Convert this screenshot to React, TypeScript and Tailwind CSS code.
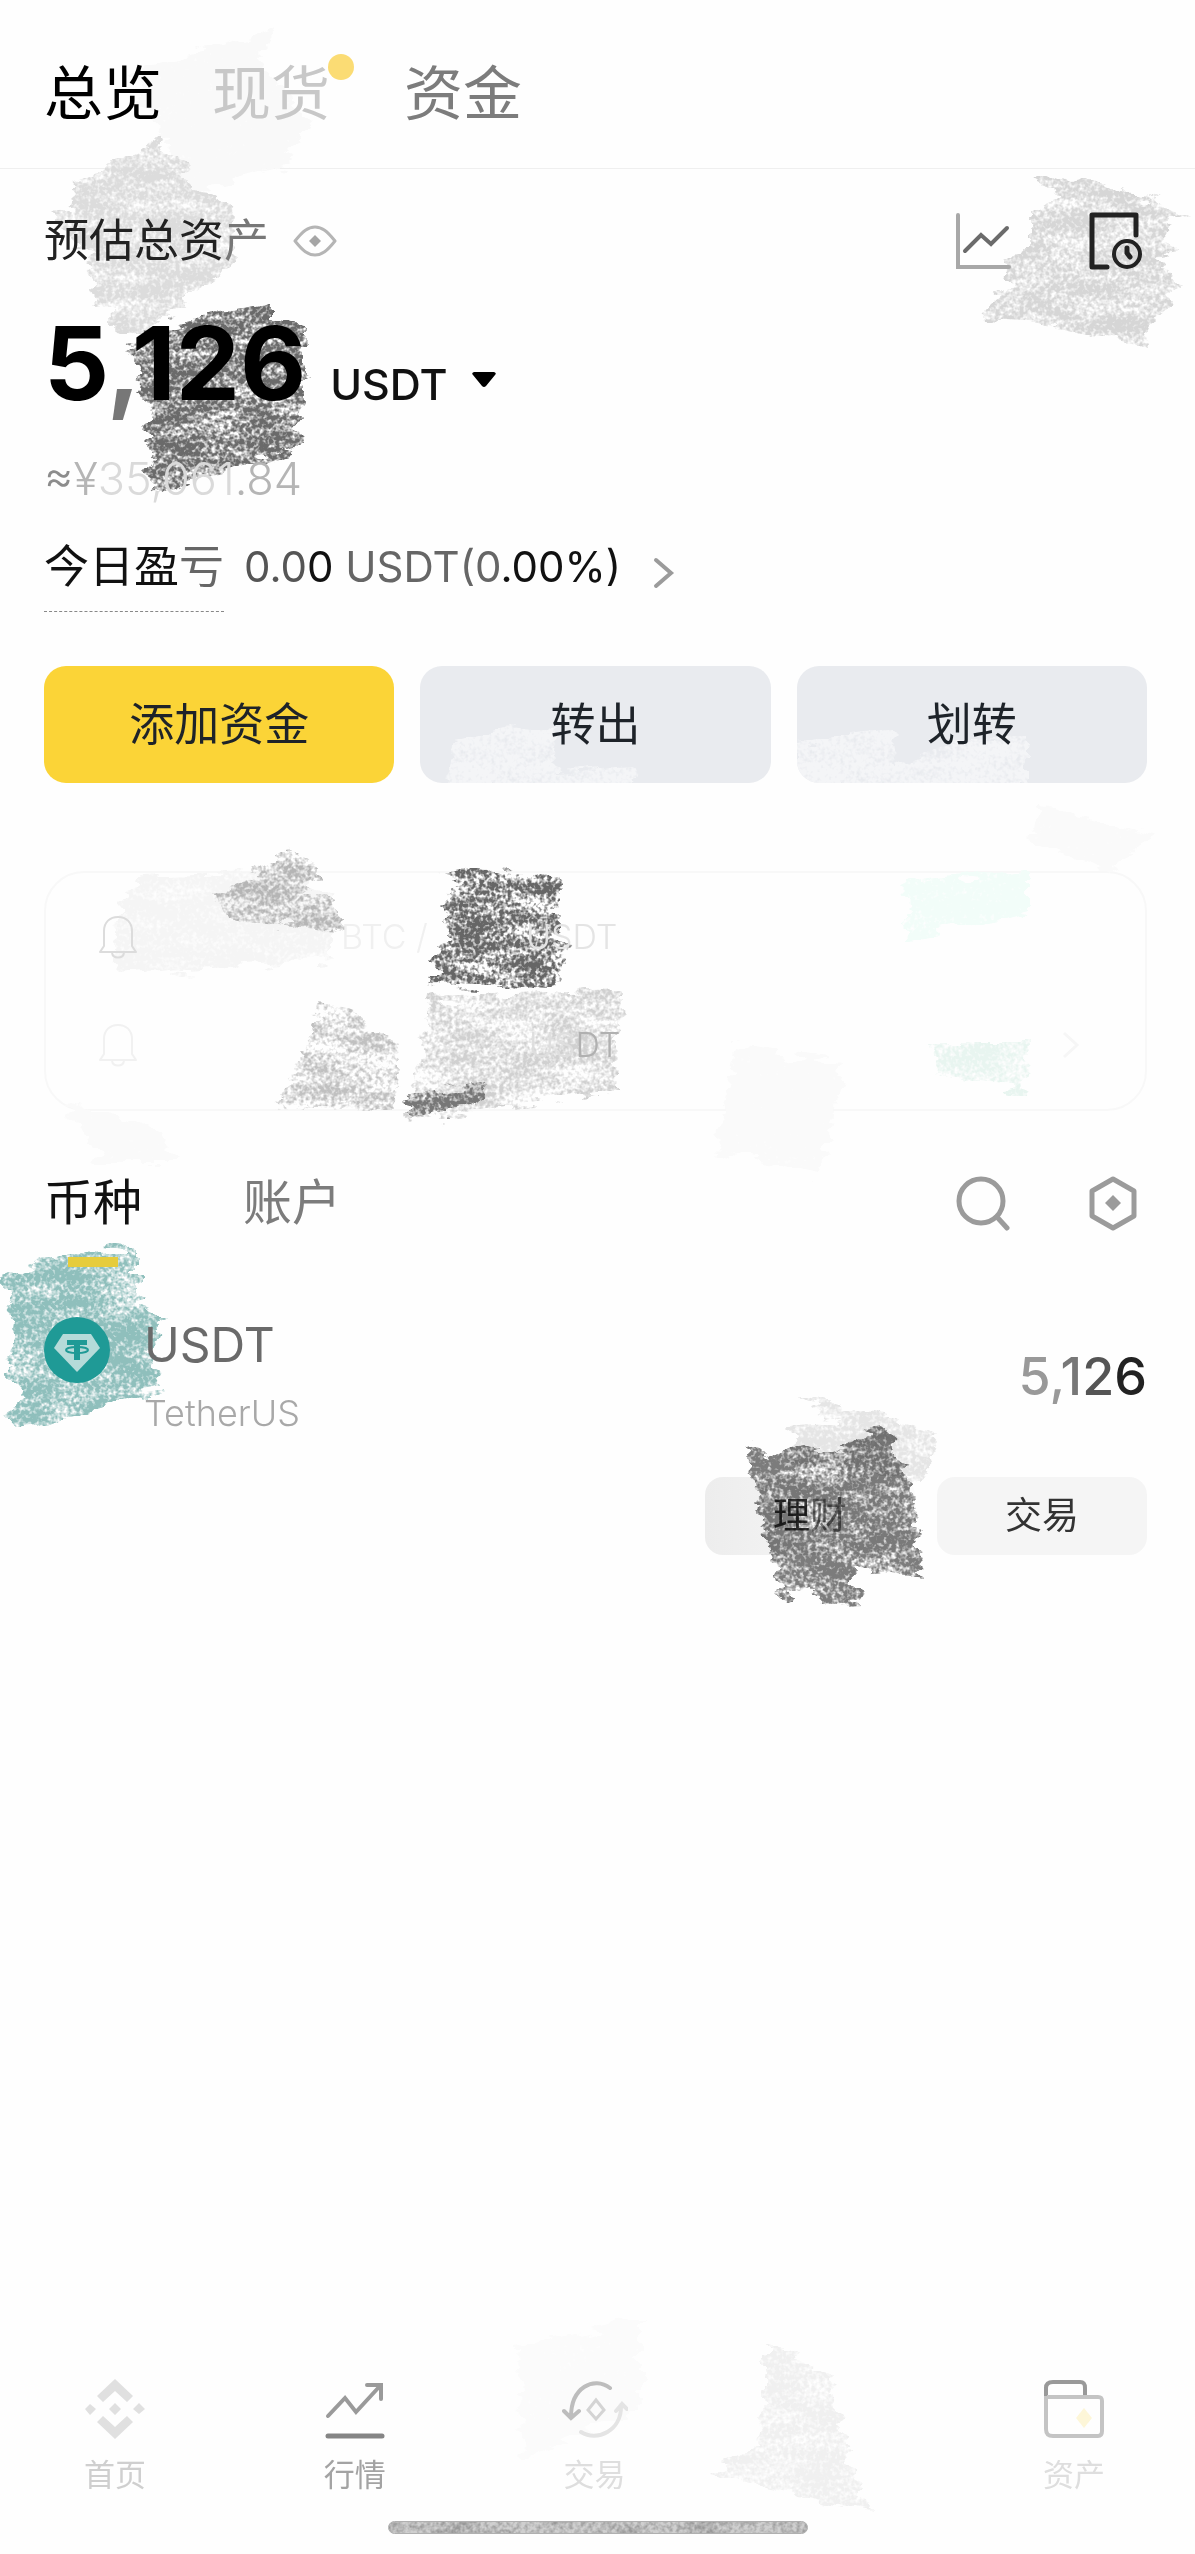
import { useId, useState } from "react";

type ScribbleProps = {
  className: string;
  viewBox: string;
  points: string;
  color: string;
  seed?: number;
  gain?: number;
  bias?: number;
};

// Crayon-like patch laid under or multiplied over the content
const Scribble = ({
  className,
  viewBox,
  points,
  color,
  seed = 1,
  gain = 4,
  bias = -1.2,
}: ScribbleProps) => {
  const id = useId();
  return (
    <svg
      aria-hidden="true"
      viewBox={viewBox}
      className={`pointer-events-none absolute overflow-visible ${className}`}
    >
      <filter
        id={id}
        x="-10%"
        y="-10%"
        width="120%"
        height="120%"
        colorInterpolationFilters="sRGB"
      >
        <feTurbulence
          type="fractalNoise"
          baseFrequency="0.03 0.09"
          numOctaves={3}
          seed={seed}
          result="edge"
        />
        <feDisplacementMap
          in="SourceGraphic"
          in2="edge"
          scale={26}
          xChannelSelector="R"
          yChannelSelector="G"
          result="rough"
        />
        <feTurbulence
          type="fractalNoise"
          baseFrequency="0.02 0.06"
          numOctaves={2}
          seed={seed + 7}
          result="broad"
        />
        <feTurbulence
          type="fractalNoise"
          baseFrequency="0.25"
          numOctaves={3}
          seed={seed + 3}
          result="fine"
        />
        <feComposite
          in="fine"
          in2="broad"
          operator="arithmetic"
          k1={0}
          k2={0.6}
          k3={0.4}
          k4={0}
        />
        <feColorMatrix
          values={`0 0 0 0 0  0 0 0 0 0  0 0 0 0 0  0 0 0 ${gain} ${bias}`}
          result="grain"
        />
        <feComposite in="rough" in2="grain" operator="in" />
      </filter>
      <polygon points={points} fill={color} filter={`url(#${id})`} />
    </svg>
  );
};

const EyeIcon = () => (
  <svg viewBox="0 0 44 32" className="h-8 w-11" fill="none">
    <path
      d="M2 16C10 6 15 2 22 2s12 4 20 14c-8 10-13 14-20 14S10 26 2 16Z"
      stroke="#b5b5b5"
      strokeWidth="3"
      strokeLinejoin="round"
    />
    <path d="m22 10 6 6-6 6-6-6Z" fill="#a5a5a5" />
  </svg>
);

const ChartIcon = () => (
  <svg viewBox="0 0 56 58" className="h-[58px] w-14" fill="none" strokeLinecap="round">
    <path d="M3 3v52h51" stroke="#a8a8a8" strokeWidth="4" />
    <path d="m10 39 16-16 10 9 16-16" stroke="#6b6b6b" strokeWidth="4" />
  </svg>
);

const HistoryIcon = () => (
  <svg viewBox="0 0 54 58" className="h-[58px] w-[54px]" fill="none" stroke="#222" strokeLinecap="round">
    <path d="M47 23V3H3v52h15" strokeWidth="5" strokeLinejoin="round" />
    <circle cx="38" cy="42" r="13" strokeWidth="4" />
    <path d="M38 36v5l3 4" strokeWidth="5" />
  </svg>
);

const BellIcon = ({ color }: { color: string }) => (
  <svg viewBox="0 0 42 46" className="h-[46px] w-[42px]" fill="none" stroke={color} strokeWidth="2">
    <path d="M7 32V17C7 8 13 3 21 3s14 5 14 14v15l4 6H3Z" strokeLinejoin="round" />
    <path d="M15 39c1 6 11 6 12 0" />
  </svg>
);

const SearchIcon = () => (
  <svg viewBox="0 0 56 56" className="size-14" fill="none" stroke="#9b9b9b" strokeWidth="5" strokeLinecap="round">
    <circle cx="26" cy="26" r="22" />
    <path d="m42 42 10 11" />
  </svg>
);

const HexIcon = () => (
  <svg viewBox="0 0 48 56" className="h-14 w-12" fill="none">
    <path d="M24 4 45 16v25L24 53 3 41V16Z" stroke="#9b9b9b" strokeWidth="5" strokeLinejoin="round" />
    <path d="m24 20 8 8-8 8-8-8Z" fill="#9b9b9b" />
  </svg>
);

const TetherLogo = () => (
  <svg viewBox="0 0 66 66" className="size-[66px] shrink-0">
    <circle cx="33" cy="33" r="33" fill="#1f9a96" />
    <path d="M19 17h28l9 14-23 24L10 31Z" fill="#b5dbd9" />
    <path d="M23 23h20v5h-7v15h-6V28h-7Z" fill="#1f9a96" />
    <ellipse cx="33" cy="33" rx="11" ry="3" fill="none" stroke="#1f9a96" strokeWidth="2" />
  </svg>
);

const HomeIcon = () => (
  <svg viewBox="0 0 60 60" className="size-[60px]" fill="#e0e0e0">
    <path d="m30 0 18 17-6 6-12-11-12 11-6-6Z" />
    <path d="m30 60 18-17-6-6-12 11-12-11-6 6Z" />
    <path d="m5 25 6 5-6 6-5-6ZM54 24l6 6-6 5-6-5ZM30 24l6 6-6 6-6-6Z" />
  </svg>
);

const MarketIcon = () => (
  <svg viewBox="0 0 60 60" className="size-[60px]" fill="none" stroke="#9a9a9a" strokeLinecap="round" strokeWidth="4">
    <path d="m3 37 17-18 11 14L54 8" />
    <path d="M42 6h14v14" />
    <path d="M3 57h54" stroke="#858585" strokeWidth="5" />
  </svg>
);

const TradeIcon = () => (
  <svg viewBox="0 0 66 60" className="h-[60px] w-[66px]" fill="none" strokeWidth="4" strokeLinecap="round">
    <path d="M48 9C32-3 9 8 9 38M2 32l7 7 8-7" stroke="#bdbdbd" />
    <path d="M19 53c16 10 41-1 40-27M54 32l6-7 5 5" stroke="#e4e4e4" />
    <path d="m34 21 8 10-8 9-8-9Z" stroke="#d4d4d4" strokeWidth="3" />
  </svg>
);

const WalletIcon = () => (
  <svg viewBox="0 0 62 60" className="h-[60px] w-[62px]" fill="none" strokeWidth="4">
    <path d="M3 17V9c0-4 2-6 7-6h27c4 0 5 2 5 6v9" stroke="#999" />
    <path d="M3 17v33c0 5 2 7 7 7h45c3 0 4-2 4-5V22c0-3-1-4-4-4H4" stroke="#c4c4c4" />
    <path d="m41 29 8 10-8 10-8-10Z" fill="#fdf6d8" />
  </svg>
);

const navItems = [
  { label: "首页", icon: <HomeIcon />, color: "text-[#cfcfcf]" },
  { label: "行情", icon: <MarketIcon />, color: "text-[#a3a3a3]" },
  { label: "交易", icon: <TradeIcon />, color: "text-[#dedede]" },
  { label: "", icon: null, color: "" },
  { label: "资产", icon: <WalletIcon />, color: "text-[#dedede]" },
];

const Header = () => (
  <header className="relative border-b border-[#efefef]">
    <Scribble
      className="left-32 top-7 h-[165px] w-[180px]"
      viewBox="130 28 180 165"
      points="130,70 280,28 260,60 310,120 290,165 190,195 165,133"
      color="#f9f9f9"
      gain={6}
      bias={-1}
    />
    <nav className="relative flex h-42 items-center gap-[50px] pt-5 pl-11 text-[59px] leading-[64px]">
      <a href="#overview" className="text-black">总览</a>
      <a href="#spot" className="relative text-[#c8c8c8]">
        现货
        <span className="absolute -top-2 -right-6 size-[26px] rounded-full bg-[#fbdc74]" />
      </a>
      <a href="#funding" className="ml-6 text-[#7c7c7c]">资金</a>
    </nav>
  </header>
);

const Balance = () => (
  <section className="relative pt-10">
    <Scribble
      className="-top-9 left-[50px] h-[205px] w-[185px]"
      viewBox="50 133 185 205"
      points="165,133 130,158 75,185 72,210 50,215 95,262 90,290 98,305 110,310 112,335 125,338 150,325 235,262 232,205 213,192 190,190 185,160 160,150"
      color="#dcdcdc"
      gain={4}
      bias={-1.2}
    />
    <Scribble
      className="top-[3px] right-[10px] h-[176px] w-[196px]"
      viewBox="989 172 196 176"
      points="1033,178 1045,172 1075,185 1090,178 1185,212 1165,222 1170,250 1160,262 1178,285 1165,310 1148,320 1143,348 1040,322 990,318 989,305 1010,285 1005,270 1030,250 1030,212 1045,205 1055,195"
      color="#d6d6d6"
      seed={5}
      gain={4}
      bias={-1.3}
    />
    <Scribble
      className="top-[134px] left-[125px] h-[187px] w-[180px]"
      viewBox="125 303 180 187"
      points="125,345 155,327 272,303 272,318 305,330 305,400 298,418 300,440 303,445 150,495 148,480 158,455 143,440 155,415 138,390 140,365 127,350"
      color="#6a6a6a"
      seed={9}
      gain={4}
      bias={-1.3}
    />

    <div className="relative pr-12 pl-11">
      <div className="flex h-16 items-center">
        <h1 className="text-[45px] leading-[64px] text-[#222]">
          预估总资<span className="text-[#777]">产</span>
        </h1>
        <button aria-label="隐藏资产" className="ml-6">
          <EyeIcon />
        </button>
        <div className="ml-auto flex gap-[78px] pr-1">
          <button aria-label="图表"><ChartIcon /></button>
          <button aria-label="记录"><HistoryIcon /></button>
        </div>
      </div>

      <div className="mt-10 flex items-baseline">
        <span className="text-[102px] leading-[100px] font-bold text-black">
          5<span className="text-[#777]">,</span>126
        </span>
        <button className="ml-6 flex items-center gap-6 text-[43px] leading-[56px] font-medium text-[#111]">
          USDT
          <svg viewBox="0 0 24 16" className="mb-2 h-4 w-6">
            <path d="M2 0h20q3 1 1 3L14 14q-2 2-4 0L1 3Q-1 1 2 0Z" fill="#000" />
          </svg>
        </button>
      </div>

      <p className="mt-[38px] text-[45px] leading-[56px] font-light text-[#dadada]">
        <span className="text-[#8c8c8c]">≈</span>
        <span className="text-[#b5b5b5]">¥</span>35,061<span className="text-[#b5b5b5]">.84</span>
      </p>

      <a href="#pnl" className="mt-8 flex items-start text-[45px] leading-[56px] text-[#111]">
        <span className="border-b border-dashed border-[#888] pb-4">
          今日盈<span className="text-[#666]">亏</span>
        </span>
        <span className="ml-5 text-[42px]">
          <span className="text-[#555]">0.0</span>0 <span className="text-[#666]">USDT(0</span>.00%)
        </span>
        <svg viewBox="0 0 22 32" className="mt-[18px] ml-8 h-8 w-[22px]" fill="none">
          <path d="m3 3 15 13L3 29" stroke="#9b9b9b" strokeWidth="4" strokeLinecap="round" />
        </svg>
      </a>
    </div>
  </section>
);

const Actions = () => (
  <section className="mt-[54px] mr-12 ml-11 grid grid-cols-3 gap-[26px] text-[45px] text-[#1e2329]">
    <button className="h-[117px] rounded-[22px] bg-[#fbd437]">添加资金</button>
    <button className="relative h-[117px] overflow-hidden rounded-[22px] bg-[#e9ebef]">
      <Scribble
        className="bottom-0 left-7 h-14 w-[190px]"
        viewBox="0 0 190 56"
        points="8,12 60,0 110,4 108,46 180,40 190,60 0,60"
        color="#f4f5f7"
        gain={4}
        bias={-1.2}
      />
      <span className="relative">转出</span>
    </button>
    <button className="relative h-[117px] overflow-hidden rounded-[22px] bg-[#e9ebef]">
      <Scribble
        className="bottom-0 left-0 h-14 w-[230px]"
        viewBox="0 0 230 56"
        points="0,16 98,2 96,40 160,14 230,6 230,60 0,60"
        color="#f4f5f7"
        gain={4}
        bias={-1.2}
      />
      <span className="relative">划转</span>
    </button>
  </section>
);

const Notices = () => (
  <section className="relative mt-[88px] mr-12 ml-11 h-60 rounded-[40px] border-2 border-[#f8f8f8]">
    <Scribble
      className="top-0 left-[70px] h-[105px] w-[215px]"
      viewBox="115 872 215 105"
      points="140,875 280,870 330,900 330,960 115,975 120,900"
      color="#f5f5f5"
      gain={4}
      bias={-1}
    />
    <Scribble
      className="-top-5 left-[174px] h-20 w-[126px]"
      viewBox="220 855 126 80"
      points="292,852 318,868 305,895 330,895 345,935 225,920 220,895"
      color="#b5b5b5"
      seed={12}
      gain={4}
      bias={-1.5}
    />
    <Scribble
      className="-top-1 left-[384px] h-[120px] w-[138px]"
      viewBox="430 870 138 120"
      points="442,876 475,870 560,878 555,935 568,945 555,990 430,985 440,950 450,930 440,905 455,885"
      color="#666"
      seed={21}
      gain={5}
      bias={-1.9}
    />
    <Scribble
      className="top-[126px] left-[229px] h-[110px] w-[120px]"
      viewBox="275 998 120 110"
      points="320,998 398,1040 395,1108 275,1105 310,1040"
      color="#c0c0c0"
      seed={31}
      gain={4}
      bias={-1.6}
    />
    <Scribble
      className="top-[118px] left-[359px] h-32 w-[215px]"
      viewBox="405 990 215 128"
      points="430,995 620,988 618,1092 500,1105 410,1120 405,1100 420,1060"
      color="#d0d0d0"
      seed={41}
      gain={4}
      bias={-1.5}
    />
    <Scribble
      className="top-[205px] left-[360px] h-10 w-20"
      viewBox="0 0 80 40"
      points="0,20 80,4 70,28 4,40"
      color="#777"
      seed={8}
      gain={5}
      bias={-1.8}
    />
    <Scribble
      className="-top-1 right-[116px] h-[70px] w-[125px]"
      viewBox="905 870 125 70"
      points="905,885 1030,870 1030,915 910,940"
      color="#f2fdf9"
      gain={5}
      bias={-1.2}
    />
    <Scribble
      className="top-[158px] right-[116px] h-[60px] w-24"
      viewBox="930 1030 96 60"
      points="930,1040 1025,1040 1020,1090 935,1075"
      color="#e8f5f0"
      seed={6}
      gain={4}
      bias={-1.3}
    />
    <Scribble
      className="-top-[67px] -right-3 h-[65px] w-32"
      viewBox="1030 805 128 65"
      points="1045,805 1160,835 1110,870 1030,840"
      color="#fafafa"
      gain={6}
      bias={-1}
    />
    <Scribble
      className="top-[173px] right-[300px] h-[130px] w-[130px]"
      viewBox="715 1045 130 130"
      points="735,1045 845,1060 820,1175 715,1150"
      color="#fafafa"
      gain={6}
      bias={-1}
    />
    <Scribble
      className="top-[228px] left-4 h-[60px] w-[120px]"
      viewBox="60 1110 120 60"
      points="60,1110 140,1130 180,1170 100,1170"
      color="#fafafa"
      gain={6}
      bias={-1}
    />

    <ul className="relative flex h-full flex-col justify-center gap-[62px] pr-16 pl-[51px] text-[34px] leading-[46px] font-light">
      <li className="flex items-center text-[#f0f0f0]">
        <BellIcon color="#dcdcdc" />
        <span className="ml-[202px]">BTC /</span>
        <span className="ml-[98px] text-[#e4e4e4]">USDT</span>
      </li>
      <li className="flex items-center">
        <BellIcon color="#f1f1f1" />
        <span className="ml-[390px] flex-1 text-[#dedede]">
          US<span className="text-[#b0b0b0]">DT</span>
        </span>
        <svg viewBox="0 0 20 30" className="h-[30px] w-5" fill="none">
          <path d="m3 3 13 12L3 27" stroke="#f6f6f6" strokeWidth="3" />
        </svg>
      </li>
    </ul>
  </section>
);

const Assets = () => {
  const [tab, setTab] = useState("coin");

  return (
    <section className="relative mt-16 pr-12 pl-11">
      <Scribble
        className="top-[71px] left-0 h-[181px] w-[165px]"
        viewBox="0 1247 165 181"
        points="0,1280 40,1262 137,1247 137,1300 165,1315 150,1350 163,1390 10,1432 12,1412 20,1390 5,1375 20,1340 5,1315 10,1300 5,1290"
        color="#8fbfbc"
        seed={14}
        gain={4}
        bias={-1.2}
      />

      <div className="relative flex items-start">
        <button
          onClick={() => setTab("coin")}
          className="flex flex-col items-center text-[49px] leading-[56px] text-[#111]"
        >
          币种
          <span
            className={`mt-[26px] h-[10px] w-[50px] ${
              tab === "coin" ? "bg-[#e6cc3c]" : "bg-transparent"
            }`}
          />
        </button>
        <button
          onClick={() => setTab("account")}
          className="ml-[101px] text-[49px] leading-[56px] text-[#7c7c7c]"
        >
          账户
        </button>
        <div className="ml-auto flex gap-[78px] pr-2.5">
          <button aria-label="搜索"><SearchIcon /></button>
          <button aria-label="设置"><HexIcon /></button>
        </div>
      </div>

      <div className="relative mt-[50px] flex items-start">
        <TetherLogo />
        <div className="ml-[34px]">
          <h2 className="text-[48px] leading-[56px] text-[#6a6a6a]">USDT</h2>
          <p className="mt-4 text-[36px] leading-[48px] font-light text-[#a8a8a8]">TetherUS</p>
        </div>
        <span className="ml-auto self-center text-[52px] leading-[56px] font-medium">
          <span className="text-[#999]">5,</span>
          <span className="text-[#777]">1</span>
          <span className="text-[#555]">2</span>
          <span className="text-[#222]">6</span>
        </span>
      </div>

      <div className="relative mt-10 flex justify-end gap-[22px] text-[37px] text-[#333]">
        <button className="h-[78px] w-[210px] rounded-[18px] bg-linear-to-r from-[#ededed] to-[#fbfbfb]">
          理<span className="text-[#777]">财</span>
        </button>
        <button className="h-[78px] w-[210px] rounded-[18px] bg-[#f5f5f5]">交易</button>
      </div>

      <Scribble
        className="top-[219px] right-[255px] h-[85px] w-[145px] mix-blend-multiply"
        viewBox="795 1395 145 85"
        points="795,1395 940,1435 925,1480 800,1470 790,1430 840,1425"
        color="#e6e6e6"
        seed={17}
        gain={4}
        bias={-1.2}
      />
      <Scribble
        className="top-[249px] right-[270px] h-[180px] w-[182px] mix-blend-multiply"
        viewBox="743 1425 182 180"
        points="743,1452 757,1447 770,1460 790,1445 820,1455 855,1440 880,1425 893,1430 890,1455 905,1465 925,1575 895,1570 855,1573 860,1603 820,1605 810,1590 785,1603"
        color="#7c7c7c"
        seed={25}
        gain={4}
        bias={-1.2}
      />
    </section>
  );
};

const TabBar = () => (
  <footer className="relative mt-auto pb-5">
    <Scribble
      className="-top-[60px] left-[520px] h-[140px] w-[120px]"
      viewBox="520 2310 120 140"
      points="520,2340 640,2310 640,2400 525,2450"
      color="#fbfbfb"
      gain={6}
      bias={-1}
    />
    <Scribble
      className="-top-[34px] right-[325px] h-[155px] w-[158px]"
      viewBox="712 2345 158 155"
      points="765,2345 830,2370 840,2430 870,2510 712,2475 755,2440 765,2400"
      color="#f0f0f0"
      seed={33}
      gain={4}
      bias={-1.3}
    />
    <nav className="relative flex justify-between pr-[71px] pl-[65px] text-[31px] leading-[40px]">
      {navItems.map((item, i) => (
        <a
          key={i}
          href="#"
          aria-label={item.label || "更多"}
          className={`flex w-[100px] flex-col items-center gap-4 ${item.color}`}
        >
          {item.icon}
          {item.label && <span>{item.label}</span>}
        </a>
      ))}
    </nav>
    <div className="relative mx-auto mt-[26px] h-[13px] w-[420px] overflow-hidden rounded-full border border-[#b0b0b0] bg-[#cfcfcf]">
      <Scribble
        className="top-0 left-0 h-[13px] w-[420px]"
        viewBox="0 0 420 13"
        points="0,-20 420,-20 420,33 0,33"
        color="#999"
        seed={4}
        gain={3}
        bias={-1.1}
      />
    </div>
  </footer>
);

const App = () => {
  return (
    <main className="flex min-h-screen flex-col overflow-hidden bg-[#fefefe] font-['Inter','Noto_Sans_CJK_SC',sans-serif]">
      <Header />
      <Balance />
      <Actions />
      <Notices />
      <Assets />
      <TabBar />
    </main>
  );
};

export default App;
